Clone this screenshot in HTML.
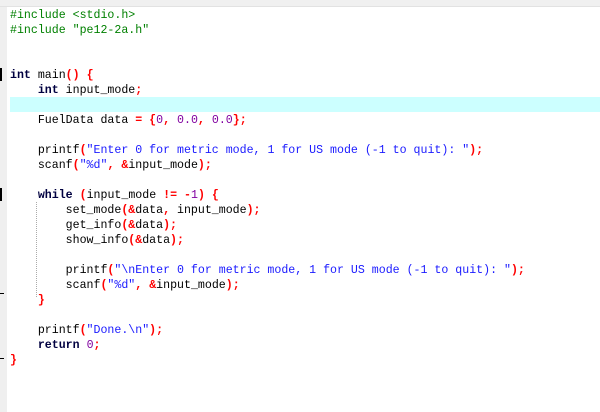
<!DOCTYPE html>
<html><head><meta charset="utf-8"><style>
html,body{margin:0;padding:0;background:#fff;width:600px;height:412px;overflow:hidden;position:relative}
.top{position:absolute;left:0;top:0;width:600px;height:6px;background:#f0f0f0;border-bottom:1px solid #e2e2e2}
.gut{position:absolute;left:0;top:7px;width:7px;height:405px;background:#efefef}
.hl{position:absolute;left:10px;top:97px;width:590px;height:15px;background:#ccffff}
pre{position:absolute;left:10px;top:8px;margin:0;font-family:"Liberation Mono",monospace;font-size:11.6px;line-height:15px;color:#000}
.p{color:#008000}.k{font-weight:bold;color:#000040}.o{color:#ff0000;font-weight:bold}.s{color:#1a1aff}.n{color:#8000a0}.e{color:#8000a0}
.mk{position:absolute;left:0;width:2px;height:13px;background:#000}
.g{position:absolute;left:36px;top:202px;width:0;height:95px;border-left:1px dotted #aaa}
</style></head><body>
<div class="top"></div><div class="gut"></div><div class="hl"></div>
<div class="mk" style="top:68px"></div><div class="mk" style="top:188px"></div>
<div class="mk" style="top:293px;height:1px;width:4px"></div><div class="mk" style="top:358px;height:1px;width:4px"></div>
<div class="g"></div>
<pre><span class="p">#include &lt;stdio.h&gt;</span>
<span class="p">#include "pe12-2a.h"</span>


<span class="k">int</span> main<span class="o">()</span> <span class="o">{</span>
    <span class="k">int</span> input_mode<span class="o">;</span>

    FuelData data <span class="o">=</span> <span class="o">{</span><span class="n">0</span><span class="o">,</span> <span class="n">0.0</span><span class="o">,</span> <span class="n">0.0</span><span class="o">};</span>

    printf<span class="o">(</span><span class="s">"Enter 0 for metric mode, 1 for US mode (-1 to quit): "</span><span class="o">);</span>
    scanf<span class="o">(</span><span class="s">"%d"</span><span class="o">,</span> <span class="o">&amp;</span>input_mode<span class="o">);</span>

    <span class="k">while</span> <span class="o">(</span>input_mode <span class="o">!=</span> <span class="o">-</span><span class="n">1</span><span class="o">)</span> <span class="o">{</span>
        set_mode<span class="o">(&amp;</span>data<span class="o">,</span> input_mode<span class="o">);</span>
        get_info<span class="o">(&amp;</span>data<span class="o">);</span>
        show_info<span class="o">(&amp;</span>data<span class="o">);</span>

        printf<span class="o">(</span><span class="s">"\nEnter 0 for metric mode, 1 for US mode (-1 to quit): "</span><span class="o">);</span>
        scanf<span class="o">(</span><span class="s">"%d"</span><span class="o">,</span> <span class="o">&amp;</span>input_mode<span class="o">);</span>
    <span class="o">}</span>

    printf<span class="o">(</span><span class="s">"Done.\n"</span><span class="o">);</span>
    <span class="k">return</span> <span class="n">0</span><span class="o">;</span>
<span class="o">}</span></pre>
</body></html>
